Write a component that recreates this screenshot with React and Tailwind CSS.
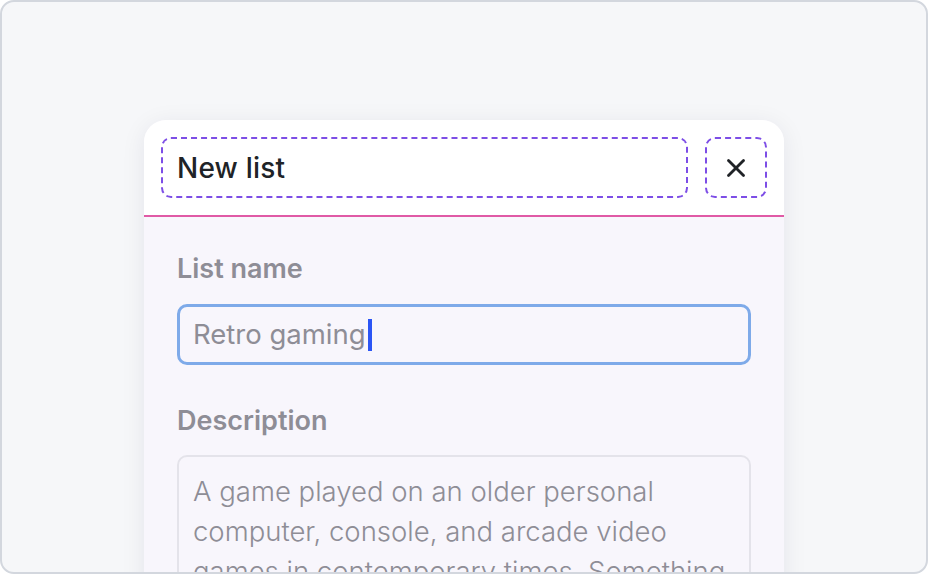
import { X } from "lucide-react";

const App = () => {
  return (
    <div
      className="w-[928px] h-[574px] overflow-hidden rounded-[14px] border-2 border-[#d3d7de] bg-[#f6f7f9]"
      style={{ fontFamily: "Inter, 'Noto Sans', sans-serif" }}
    >
      <div className="mx-auto mt-[118px] w-[640px] rounded-t-[22px] bg-[#f8f6fc] shadow-[0_4px_24px_rgba(30,30,60,0.08)]">
        {/* Header */}
        <div className="flex items-center gap-[17px] rounded-t-[22px] border-b-2 border-[#e05aa6] bg-white px-[17px] py-[17px]">
          <div className="flex h-[61px] flex-1 items-center rounded-[10px] border-2 border-dashed border-[#7d4ee6] px-[14px]">
            <span className="text-[28px] font-medium tracking-[0.2px] text-[#202327]">New list</span>
          </div>
          <button className="flex h-[61px] w-[62px] items-center justify-center rounded-[10px] border-2 border-dashed border-[#7d4ee6] text-[#202327]">
            <X size={30} strokeWidth={2.25} />
          </button>
        </div>

        {/* Body */}
        <div className="px-[33px] pt-[36px] pb-10">
          <label className="block text-[27px] leading-[32px] font-semibold text-[#8e8d96]">List name</label>
          <div className="mt-[19px] flex h-[61px] items-center rounded-[10px] border-[3px] border-[#7eaae9] px-[13px]">
            <span className="text-[27.5px] text-[#8e8d96]">Retro gaming</span>
            <span className="ml-[2px] h-[32px] w-[4px] bg-[#2b55f5]" />
          </div>

          <label className="mt-[40px] block text-[27px] leading-[32px] font-semibold text-[#8e8d96]">Description</label>
          <div className="mt-[18px] rounded-[10px] border-2 border-[#e4e3ea] px-[14px] pt-[14px] pb-4">
            <p className="text-[27.5px] leading-[40px] font-light text-[#8e8d96]">
              A game played on an older personal computer, console, and arcade video games in contemporary times. Something
            </p>
          </div>
        </div>
      </div>
    </div>
  );
};

export default App;
